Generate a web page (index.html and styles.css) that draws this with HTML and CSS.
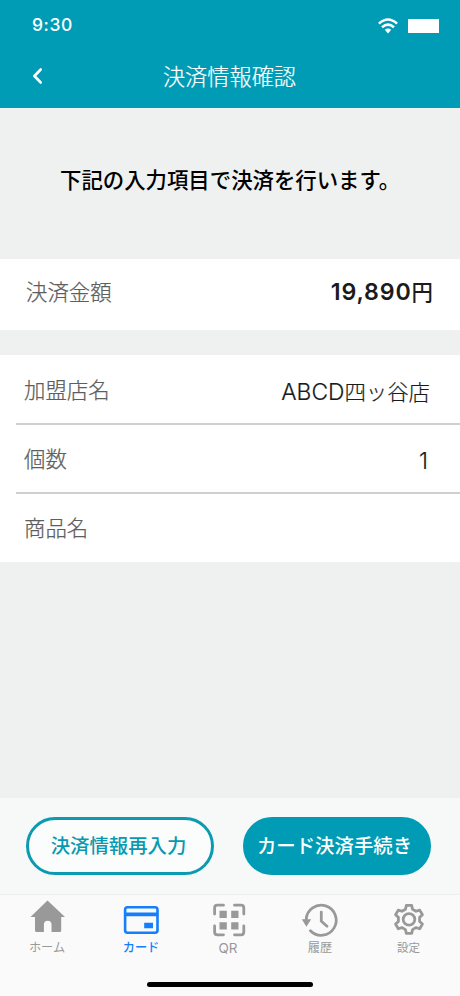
FILE: index.html
```html
<!DOCTYPE html>
<html lang="ja">
<head>
<meta charset="utf-8">
<title>決済情報確認</title>
<link rel="stylesheet" href="styles.css">
</head>
<body>
<div class="screen">
  <header class="header">
    <div class="status">
      <span class="time">9:30</span>
      <span class="status-icons">
        <svg class="wifi" viewBox="0 0 20 16"><g fill="none" stroke="#fff" stroke-width="2.5"><path d="M.9 5.7Q10-2.6 19.1 5.7"/><path d="M4 9.3Q10 4 16 9.3"/></g><path d="M6.8 11.7Q10 9.2 13.2 11.7L10 15.5Z" fill="#fff"/></svg>
        <span class="battery"></span>
      </span>
    </div>
    <div class="titlebar">
      <svg class="back" viewBox="0 0 12 18"><path d="M8.6 2.6 2.4 9l6.2 6.4" fill="none" stroke="#fff" stroke-width="2.8" stroke-linecap="round" stroke-linejoin="round"/></svg>
      <h1>決済情報確認</h1>
    </div>
  </header>
  <main class="content">
    <p class="lead">下記の入力項目で決済を行います。</p>
    <section class="amount"><span class="label">決済金額</span><strong><span class="num">19,890</span>円</strong></section>
    <section class="details">
      <div class="row"><span class="label">加盟店名</span><span class="value"><span class="latin">ABCD</span>四ッ谷店</span></div>
      <div class="row"><span class="label">個数</span><span class="value one">1</span></div>
      <div class="row"><span class="label">商品名</span></div>
    </section>
  </main>
  <div class="actions">
    <button class="btn">決済情報再入力</button>
    <button class="btn primary">カード決済手続き</button>
  </div>
  <nav class="tabs">
    <a class="tab"><svg viewBox="29 900 36 38"><path d="M47.5 900.5 65 917H61.2V930.5Q61.2 932 59.7 932H51.5V924.5Q51.5 920.7 47.7 920.7T43.9 924.5V932H36.5Q35 932 35 930.5V917H30.5Z" fill="currentColor"/></svg><span>ホーム</span></a>
    <a class="tab active"><svg viewBox="123 900 36 38"><rect x="125.1" y="907.3" width="32.4" height="25.5" rx="2.5" fill="none" stroke="currentColor" stroke-width="2.6"/><path d="M125 912.6H158V916.2H125ZM144.2 922.8H153V928.3H144.2Z" fill="currentColor"/></svg><span>カード</span></a>
    <a class="tab qr"><svg viewBox="210 900 36 38"><path d="M214.6 914V908Q214.6 905.2 217.4 905.2H223.5M234.5 905.2H241Q243.8 905.2 243.8 908V914M243.8 926V932Q243.8 934.8 241 934.8H234.5M223.5 934.8H217.4Q214.6 934.8 214.6 932V926" fill="none" stroke="currentColor" stroke-width="2.8" stroke-linecap="round"/><path d="M219.5 910.8H226.8V918.1H219.5ZM231.2 910.8H238.5V918.1H231.2ZM219.5 922.2H226.8V929.5H219.5ZM231.2 922.2H238.5V929.5H231.2Z" fill="currentColor"/></svg><span>QR</span></a>
    <a class="tab"><svg viewBox="302 900 36 38"><path d="M306.2 919.5A15 15 0 1 1 310.4 930.7M321.3 912.2V921.2L327 926.2" fill="none" stroke="currentColor" stroke-width="2.8" stroke-linecap="round"/><path d="M301.8 919.3H311.2L306.4 926.7Z" fill="currentColor"/></svg><span>履歴</span></a>
    <a class="tab settings"><svg viewBox="-18 -19.4 36 38"><g fill="none" stroke="currentColor" stroke-width="2.8" stroke-linejoin="round"><path d="M-3.52-10.21-2.71-13.94H2.71L3.52-10.21 7.08-8.15 10.72-9.32 13.43-4.62 10.6-2.06V2.06L13.43 4.62 10.72 9.32 7.08 8.15 3.52 10.21 2.71 13.94H-2.71L-3.52 10.21-7.08 8.15-10.72 9.32-13.43 4.62-10.6 2.06V-2.06L-13.43-4.62-10.72-9.32-7.08-8.15Z"/><circle r="5.8"/></g></svg><span>設定</span></a>
    <span class="home-indicator"></span>
  </nav>
</div>
</body>
</html>
```
FILE: styles.css
```css
* { box-sizing: border-box; }
body { margin: 0; font-family: "Noto Sans CJK JP", sans-serif; color: #1b1b1b; background: #eff1f1; }
.screen { width: 460px; height: 996px; display: flex; flex-direction: column; overflow: hidden; }
.header { height: 107.5px; background: #009cb5; color: #fff; flex: none; }
.status { height: 50px; padding: 0 21px 2px 32px; display: flex; justify-content: space-between; align-items: center; }
.time { font: 500 17.5px Inter, sans-serif; letter-spacing: .6px; }
.status-icons { display: flex; align-items: center; gap: 10px; padding-top: 3px; }
.wifi { width: 20px; height: 16px; }
.battery { width: 31px; height: 14px; margin-top: 1px; background: #fff; }
.titlebar { height: 52px; padding-bottom: 1px; display: grid; grid-template-columns: 60px 1fr 60px; align-items: center; }
.back { width: 12px; height: 18px; margin: 1px 0 0 32px; }
h1 { margin: 0 1px 2px 0; text-align: center; font-size: 22.2px; font-weight: 300; line-height: 32px; -webkit-text-stroke: .2px; }
.content { flex: 1; }
.lead { margin: 0; height: 151.5px; padding: 55px 0 0 60px; font-size: 21.4px; line-height: 32px; font-weight: 500; color: #000; white-space: nowrap; }
.amount { height: 71px; padding: 0 27px 6px 26px; display: flex; align-items: center; justify-content: space-between; background: #fff; }
.label { font-size: 21.4px; font-weight: 300; color: #5e5e5e; line-height: 32px; margin-bottom: 1px; -webkit-text-stroke: .25px; }
.amount strong { font-size: 21.4px; font-weight: 500; line-height: 32px; }
.num { font-family: Inter, sans-serif; font-size: 23.2px; font-weight: 600; letter-spacing: .85px; }
.details { margin-top: 25px; padding-left: 16px; background: #fff; }
.row { height: 69px; padding: 0 30px 0 8px; display: flex; align-items: center; justify-content: space-between; border-bottom: 2px solid #d0d0d0; }
.row:first-child { height: 70px; }
.row:last-child { height: 68px; padding-bottom: 2px; border-bottom: 0; }
.value { font-size: 21.4px; font-weight: 300; line-height: 32px; padding-top: 4px; -webkit-text-stroke: .2px; }
.latin, .one { font-family: Inter, sans-serif; font-size: 22.8px; }
.one { padding-right: 2px; }
.actions { flex: none; height: 96px; padding: 19px 29px 0 26px; display: flex; justify-content: space-between; background: #f7f9f9; }
.btn { width: 188px; height: 58px; padding: 0 3px 2px 0; border: 3px solid #0b9bb1; border-radius: 29px; background: #fbfcfc; color: #0799b1; font: 500 19.4px "Noto Sans CJK JP", sans-serif; white-space: nowrap; }
.primary { padding-right: 5px; background: #009cb5; border-color: #009cb5; color: #fff; }
.tabs { position: relative; flex: none; height: 102.5px; padding-top: 5px; display: grid; grid-template-columns: 94px 94px 80px 104px 73px; align-items: start; background: #fafafa; border-top: 1px solid #eceeee; color: #999; }
.tab { display: flex; flex-direction: column; align-items: center; font-size: 12.2px; line-height: 18px; }
.tab svg { width: 36px; height: 38px; overflow: visible; }
.active { color: #157efb; font-weight: 500; }
.qr span { font: 13.5px/20px Inter, sans-serif; }
.settings { font-size: 11.5px; }
.home-indicator { position: absolute; left: 147px; bottom: 9px; width: 166px; height: 5px; border-radius: 3px; background: #000; }
```
